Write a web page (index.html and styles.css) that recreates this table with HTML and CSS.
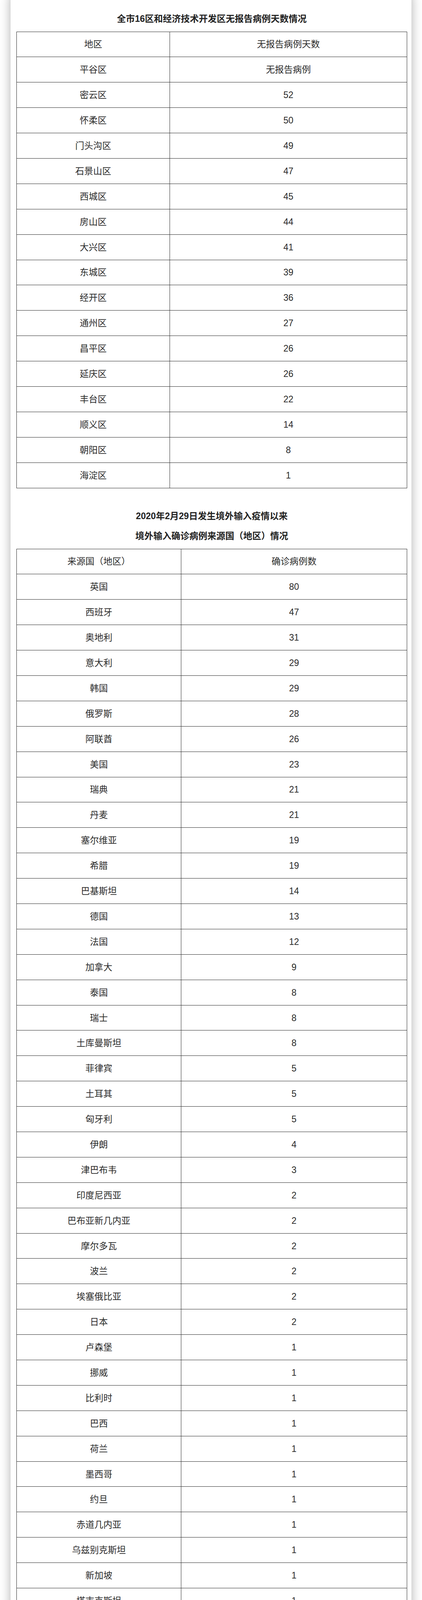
FILE: index.html
```html
<!DOCTYPE html>
<html lang="zh-CN">
<head>
<meta charset="utf-8">
<title>无报告病例天数及境外输入来源</title>
<link rel="stylesheet" href="styles.css">
</head>
<body>
<main class="card">
  <section class="section">
    <h2 class="title">全市16区和经济技术开发区无报告病例天数情况</h2>
    <table class="data-table">
      <colgroup><col class="col-district"><col></colgroup>
      <tbody>
        <tr><td>地区</td><td>无报告病例天数</td></tr>
        <tr><td>平谷区</td><td>无报告病例</td></tr>
        <tr><td>密云区</td><td>52</td></tr>
        <tr><td>怀柔区</td><td>50</td></tr>
        <tr><td>门头沟区</td><td>49</td></tr>
        <tr><td>石景山区</td><td>47</td></tr>
        <tr><td>西城区</td><td>45</td></tr>
        <tr><td>房山区</td><td>44</td></tr>
        <tr><td>大兴区</td><td>41</td></tr>
        <tr><td>东城区</td><td>39</td></tr>
        <tr><td>经开区</td><td>36</td></tr>
        <tr><td>通州区</td><td>27</td></tr>
        <tr><td>昌平区</td><td>26</td></tr>
        <tr><td>延庆区</td><td>26</td></tr>
        <tr><td>丰台区</td><td>22</td></tr>
        <tr><td>顺义区</td><td>14</td></tr>
        <tr><td>朝阳区</td><td>8</td></tr>
        <tr><td>海淀区</td><td>1</td></tr>
      </tbody>
    </table>
  </section>

  <section class="section">
    <h2 class="title">2020年2月29日发生境外输入疫情以来<br>境外输入确诊病例来源国（地区）情况</h2>
    <table class="data-table">
      <colgroup><col class="col-country"><col></colgroup>
      <tbody>
        <tr><td>来源国（地区）</td><td>确诊病例数</td></tr>
        <tr><td>英国</td><td>80</td></tr>
        <tr><td>西班牙</td><td>47</td></tr>
        <tr><td>奥地利</td><td>31</td></tr>
        <tr><td>意大利</td><td>29</td></tr>
        <tr><td>韩国</td><td>29</td></tr>
        <tr><td>俄罗斯</td><td>28</td></tr>
        <tr><td>阿联酋</td><td>26</td></tr>
        <tr><td>美国</td><td>23</td></tr>
        <tr><td>瑞典</td><td>21</td></tr>
        <tr><td>丹麦</td><td>21</td></tr>
        <tr><td>塞尔维亚</td><td>19</td></tr>
        <tr><td>希腊</td><td>19</td></tr>
        <tr><td>巴基斯坦</td><td>14</td></tr>
        <tr><td>德国</td><td>13</td></tr>
        <tr><td>法国</td><td>12</td></tr>
        <tr><td>加拿大</td><td>9</td></tr>
        <tr><td>泰国</td><td>8</td></tr>
        <tr><td>瑞士</td><td>8</td></tr>
        <tr><td>土库曼斯坦</td><td>8</td></tr>
        <tr><td>菲律宾</td><td>5</td></tr>
        <tr><td>土耳其</td><td>5</td></tr>
        <tr><td>匈牙利</td><td>5</td></tr>
        <tr><td>伊朗</td><td>4</td></tr>
        <tr><td>津巴布韦</td><td>3</td></tr>
        <tr><td>印度尼西亚</td><td>2</td></tr>
        <tr><td>巴布亚新几内亚</td><td>2</td></tr>
        <tr><td>摩尔多瓦</td><td>2</td></tr>
        <tr><td>波兰</td><td>2</td></tr>
        <tr><td>埃塞俄比亚</td><td>2</td></tr>
        <tr><td>日本</td><td>2</td></tr>
        <tr><td>卢森堡</td><td>1</td></tr>
        <tr><td>挪威</td><td>1</td></tr>
        <tr><td>比利时</td><td>1</td></tr>
        <tr><td>巴西</td><td>1</td></tr>
        <tr><td>荷兰</td><td>1</td></tr>
        <tr><td>墨西哥</td><td>1</td></tr>
        <tr><td>约旦</td><td>1</td></tr>
        <tr><td>赤道几内亚</td><td>1</td></tr>
        <tr><td>乌兹别克斯坦</td><td>1</td></tr>
        <tr><td>新加坡</td><td>1</td></tr>
        <tr><td>塔吉克斯坦</td><td>1</td></tr>
        <tr><td>赞比亚</td><td>1</td></tr>
        <tr><td>伊拉克</td><td>1</td></tr>
        <tr><td>南非</td><td>1</td></tr>
        <tr><td>毛里求斯</td><td>1</td></tr>
        <tr><td>塞内加尔</td><td>1</td></tr>
        <tr><td>中国香港</td><td>270</td></tr>
        <tr><td>中国台湾</td><td>40</td></tr>
        <tr><td>合计</td><td>805</td></tr>
      </tbody>
    </table>
  </section>
</main>
</body>
</html>
```
FILE: styles.css
```css
html, body {
  margin: 0;
  padding: 0;
  background: #ffffff;
}

body {
  font-family: "Liberation Sans", "Noto Sans CJK SC", sans-serif;
  color: #2b2b2b;
  padding: 0 27px;
}

.card {
  margin-top: -30px;
  padding: 53px 11px 90px 15px;
  background: #ffffff;
  border-radius: 24px;
  box-shadow: 0 6px 28px rgba(0, 0, 0, 0.32);
}

.section + .section {
  margin-top: 46px;
}

.title {
  margin: 0 0 6px 0;
  font-size: 23px;
  line-height: 51.5px;
  font-weight: bold;
  color: #222222;
  text-align: center;
}

.data-table {
  width: 1000px;
  table-layout: fixed;
  border-collapse: separate;
  border-spacing: 0;
  border-top: 1px solid #2a2a2a;
  border-left: 1px solid #2a2a2a;
  font-size: 23px;
  color: #2b2b2b;
}

.col-district {
  width: 392px;
}

.col-country {
  width: 421px;
}

.data-table td {
  box-sizing: border-box;
  height: 64.9px;
  padding: 0;
  border-right: 1px solid #2a2a2a;
  border-bottom: 1px solid #2a2a2a;
  text-align: center;
  vertical-align: middle;
  line-height: 30px;
}
```
